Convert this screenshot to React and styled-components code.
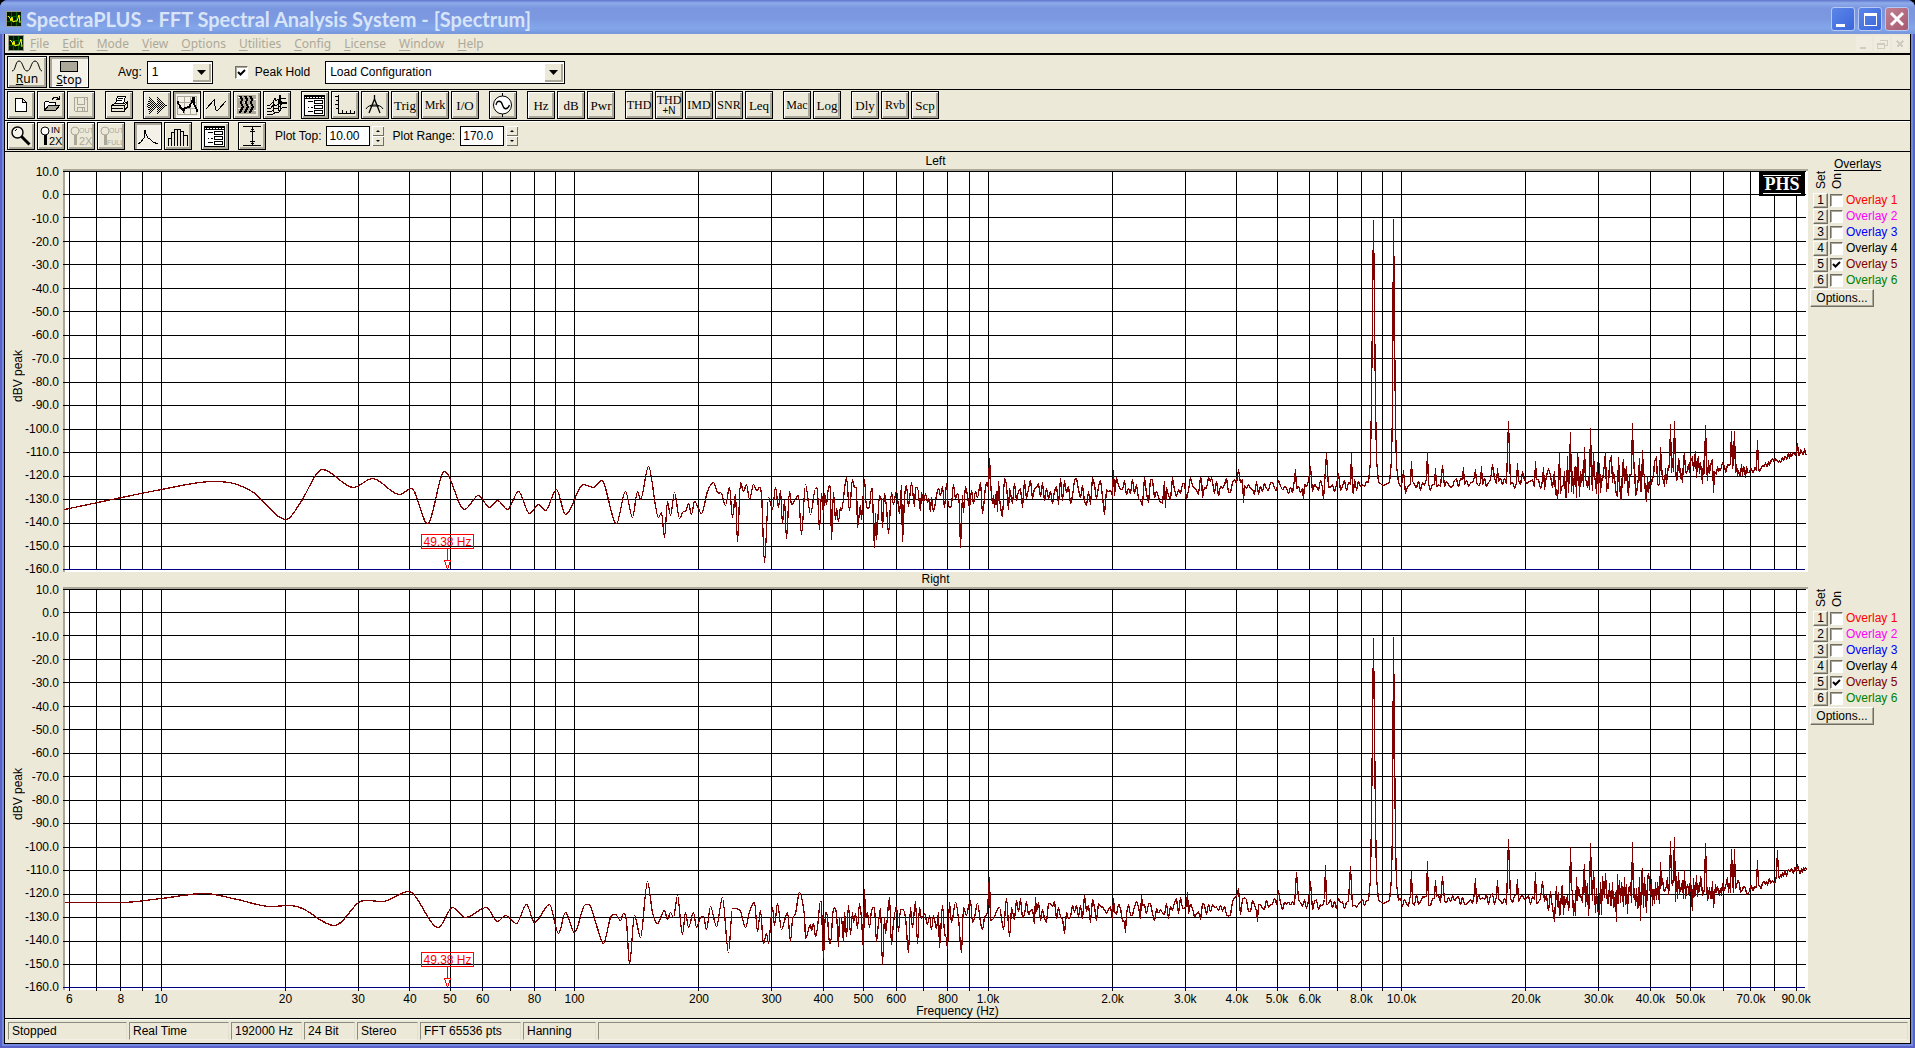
import React from 'react';
import styled, { createGlobalStyle, css } from 'styled-components';

const face = '#ece9d8';
const shade = '#aca899';
const trace = '#800000';

const GlobalStyle = createGlobalStyle`
  * { box-sizing: border-box; }
  body {
    margin: 0;
    background: #000;
    color: #000;
    font: 12px/14px "Liberation Sans", Arial, sans-serif;
  }
  button, input, select { font: inherit; color: inherit; margin: 0; }
`;

/* ---------- window frame ---------- */

const Frame = styled.div`
  display: flex;
  flex-direction: column;
  min-height: 100vh;
  padding: 0 4px 4px;
  border-radius: 8px 8px 0 0;
  background: #7489e0;
  box-shadow: inset 2px -2px 0 #5a62c8, inset -2px 0 0 #5a62c8;
`;

const TitleBar = styled.header`
  display: flex;
  align-items: center;
  height: 34px;
  margin: 0 -4px;
  padding: 3px 6px 0;
  border-radius: 8px 8px 0 0;
  background: linear-gradient(#5f75cc 0, #8eabea 3px, #7a96df 8px, #7b98e0 18px, #83a7ea 28px, #7896dc 34px);
`;

const Caption = styled.h1`
  flex: 1;
  margin: 0 0 0 4px;
  color: #d8e4f8;
  font: 700 20px/24px Lato, "Open Sans", sans-serif;
`;

const WindowButtons = styled.div`
  display: flex;
  gap: 3px;
`;

const WindowButton = styled.button`
  width: 24px;
  height: 24px;
  padding: 0;
  border: 1px solid #b6c8f4;
  border-radius: 3px;
  background: ${p => (p.$close ? 'linear-gradient(135deg, #c08090, #a85a70)' : 'linear-gradient(135deg, #5c86e8, #3a66dc)')};
  svg { display: block; }
`;

const Client = styled.main`
  flex: 1;
  display: flex;
  flex-direction: column;
  border: 1px solid #000;
  border-top: 0;
  background: ${face};
`;

const MenuBar = styled.nav`
  display: flex;
  align-items: center;
  height: 21px;
  padding: 0 2px 1px 3px;
  border-bottom: 2px solid #000;
  background: ${face};
`;

const MenuItem = styled.button`
  padding: 0 7px 0 6px;
  border: 0;
  background: none;
  color: #aca899;
  font: 12px/17px "Noto Sans", Tahoma, sans-serif;
  u { text-underline-offset: 2px; }
`;

const MdiButtons = styled.div`
  display: flex;
  gap: 2px;
  margin-left: auto;
`;

const MdiButton = styled.button`
  width: 16px;
  height: 15px;
  padding: 0;
  border: 0;
  background: #f0ede0;
  svg { display: block; }
`;

/* ---------- toolbars ---------- */

const Toolbar = styled.div`
  display: flex;
  align-items: center;
  height: ${p => p.$height}px;
  padding-left: 2px;
  border-bottom: 1px solid #000;
  box-shadow: ${p => (p.$lit ? 'inset 0 1px 0 #fff' : 'none')};
`;

const Group = styled.div`
  display: flex;
  gap: 2px;
  margin-right: ${p => p.$gap}px;
`;

const ToolButton = styled.button`
  display: flex;
  flex-direction: column;
  align-items: center;
  justify-content: center;
  width: ${p => p.$width || 28}px;
  height: ${p => p.$height || 28}px;
  padding: 0;
  border: 1px solid #000;
  background: ${face};
  box-shadow: inset 1px 1px 0 #fff, inset -2px -2px 0 ${shade};
  font: ${p => (p.$tight ? 12 : 13)}px/11px "Liberation Serif", serif;
  small { font: 10px/9px "Liberation Sans", sans-serif; }
  svg { display: block; flex: none; }
  ${p => p.$pressed && css`
    background: #f3f1e8;
    box-shadow: inset 2px 2px 0 ${shade}, inset -1px -1px 0 #fff;
  `}
`;

const BigLabel = styled.span`
  font: 12px/12px "Noto Sans", sans-serif;
`;

const Field = styled.label`
  display: flex;
  align-items: center;
  gap: ${p => p.$gap}px;
  margin-left: ${p => p.$left}px;
`;

const SelectBox = styled.span`
  position: relative;
  display: block;
  width: ${p => p.$width}px;
  select {
    display: block;
    width: 100%;
    height: 23px;
    padding: 0 22px 0 4px;
    border: 1px solid #000;
    border-radius: 0;
    background: #fff;
    appearance: none;
  }
  svg {
    position: absolute;
    top: 2px;
    right: 2px;
    pointer-events: none;
    background: ${face};
    box-shadow: inset 1px 1px 0 #fff, inset -2px -2px 0 ${shade};
  }
`;

const Check = styled.input`
  width: 13px;
  height: 13px;
  border: 1px solid;
  border-color: #716f64 #fff #fff #716f64;
  background: #fff;
  box-shadow: inset 1px 1px 0 ${shade};
  appearance: none;
  &:checked {
    background: #fff url("data:image/svg+xml,%3Csvg xmlns='http://www.w3.org/2000/svg' viewBox='0 0 11 11'%3E%3Cpath d='M2 5l2.500 2.500L9 3' fill='none' stroke='%23000' stroke-width='2'/%3E%3C/svg%3E");
  }
`;

const NumberBox = styled.input`
  width: 44px;
  height: 20px;
  padding: 0 2px;
  border: 1px solid #000;
  background: #fff;
`;

const Spinner = styled.div`
  display: flex;
  flex-direction: column;
  margin: 0 0 0 2px;
`;

const SpinButton = styled.button`
  width: 12px;
  height: 10px;
  padding: 0;
  border: 0;
  background: ${face};
  box-shadow: inset 1px 1px 0 #fff, inset -1px -1px 0 #716f64;
  svg { display: block; }
`;

/* ---------- plots ---------- */

const Plots = styled.section`
  flex: 1;
  display: grid;
  grid-template-columns: 58px minmax(0, 1fr) 102px;
  grid-template-rows: 17px minmax(200px, 1fr) 15px minmax(200px, 1fr) 28px;
`;

const PlotTitle = styled.h2`
  grid-column: 2;
  grid-row: ${p => p.$row};
  align-self: end;
  margin: 0 0 1px;
  font: 12px/14px "Liberation Sans", Arial, sans-serif;
  text-align: center;
`;

const YAxis = styled.div`
  grid-column: 1;
  grid-row: ${p => p.$row};
  display: flex;
  justify-content: space-between;
  padding: 0 4px 0 6px;
`;

const YUnit = styled.span`
  align-self: center;
  margin-bottom: -12px;
  writing-mode: vertical-rl;
  transform: rotate(180deg);
  white-space: nowrap;
`;

const YTicks = styled.div`
  display: flex;
  flex-direction: column;
  justify-content: space-between;
  margin: -4px 0 -4px;
  text-align: right;
  line-height: 14px;
`;

const PlotBox = styled.div`
  grid-column: 2;
  grid-row: ${p => p.$row};
  position: relative;
  min-height: 0;
  border-top: 2px solid ${shade};
  border-left: 2px solid ${shade};
  background: #fff;
`;

const PlotSvg = styled.svg`
  position: absolute;
  top: 0;
  left: 0;
  width: calc(100% - 2px);
  height: calc(100% - 2px);
  overflow: visible;
  shape-rendering: crispEdges;
  svg { overflow: visible; }
`;

const Cursor = styled.div`
  position: absolute;
  bottom: 3px;
  display: flex;
  flex-direction: column;
  align-items: center;
  width: 53px;
  margin-left: -26px;
  color: #f00;
  span {
    width: 53px;
    height: 15px;
    border: 1px solid #f00;
    line-height: 14px;
    text-align: center;
  }
  svg { display: block; }
`;

const Badge = styled.div`
  position: absolute;
  top: 0;
  right: 3px;
  width: 46px;
  padding: 4px 4px 2px;
  background: #000;
  color: #fff;
  font: bold 18px/17px "Liberation Serif", serif;
  text-align: center;
  span {
    display: block;
    border: solid #fff;
    border-width: 1px 0;
  }
`;

const XAxis = styled.div`
  grid-column: 2;
  grid-row: 5;
  display: flex;
  flex-direction: column;
  padding: 1px 2px 0;
  text-align: center;
  svg {
    width: 100%;
    height: 14px;
    flex: none;
    overflow: visible;
  }
  p { margin: 0 0 0 44px; line-height: 12px; }
`;

/* ---------- overlays ---------- */

const OverlayPanel = styled.aside`
  grid-column: 3;
  grid-row: ${p => p.$row} / span 2;
  padding-left: 2px;
`;

const OverlayTitle = styled.div`
  height: ${p => p.$height}px;
  padding: 5px 0 0 24px;
  text-decoration: underline;
  text-underline-offset: 2px;
`;

const OverlayHeads = styled.div`
  display: flex;
  align-items: flex-end;
  gap: 2px;
  height: 18px;
  padding-left: 4px;
  margin-bottom: 3px;
  span {
    width: 14px;
    writing-mode: vertical-rl;
    transform: rotate(180deg);
  }
`;

const OverlayRow = styled.div`
  display: flex;
  align-items: center;
  height: 16px;
  padding-left: 3px;
  label { margin-left: 3px; color: ${p => p.$color}; white-space: nowrap; }
`;

const Raised = styled.button`
  width: ${p => p.$width}px;
  height: ${p => p.$height}px;
  margin-right: 2px;
  padding: 0;
  border: 1px solid;
  border-color: #fff #716f64 #716f64 #fff;
  background: ${face};
  box-shadow: inset -1px -1px 0 ${shade};
  line-height: 12px;
`;

const OptionsRow = styled.div`
  padding-top: 1px;
`;

/* ---------- status bar ---------- */

const StatusBar = styled.footer`
  display: flex;
  gap: 2px;
  height: 25px;
  padding: 3px 2px 3px 3px;
  border-top: 1px solid #000;
  box-shadow: inset 0 1px 0 #fff;
`;

const StatusCell = styled.div`
  flex: ${p => (p.$width ? `0 0 ${p.$width}px` : '1')};
  padding-left: 3px;
  border: 1px solid;
  border-color: #8d8a7e #e2dfd0 #f3f1e6 #8d8a7e;
  line-height: 16px;
`;

/* ---------- icons ---------- */

const Icon = ({ children, size = 28, color = '#000' }) => (
  <svg width={size} height={size} viewBox={`0 0 ${size} ${size}`} fill="none" stroke={color} shapeRendering="crispEdges" aria-hidden="true">
    {children}
  </svg>
);

const AppIcon = () => (
  <svg width="16" height="16" viewBox="0 0 16 16" fill="none" aria-hidden="true">
    <rect x="0.5" y="0.5" width="15" height="15" fill="#001800" stroke="#9a9a8c" />
    <path d="M1 5.500h14M1 10.500h14M5.500 1v14M10.500 1v14" stroke="#006000" />
    <path d="M2 5l2 2 1 3 1-4 1 5 2-1 2 0 2-6 1 8" stroke="#ff0" />
  </svg>
);

const bars = [3, 9, 17, 15, 13, 11, 9, 7, 5, 3, 17, 15, 13, 11, 9, 7, 5, 3, 1, 1];

const dialogIcon = (
  <>
    <rect x="3.500" y="4.500" width="20" height="20" fill="#fff" />
    <path d="M4 5.500h19M4 7.500h19M5 6.500h1m2 0h1m2 0h1m2 0h1m2 0h1m2 0h1" />
    <path d="M7 10.500h5M7 16.500h1m2 0h2M7 20.500h5" />
    <rect x="13.500" y="9.500" width="8" height="3" />
    <rect x="13.500" y="14.500" width="8" height="3" />
    <rect x="13.500" y="19.500" width="8" height="3" />
  </>
);

const icons = {
  new: <path d="M8.500 7.500h7l4 4v9h-11zM15.500 7.500v4h4" fill="#fff" />,
  open: (
    <>
      <path d="M7.500 19.500v-8l1-1h3l1 1h6v3" fill="#fff" />
      <path d="M7.500 19.500l4-5h11l-4 5z" fill={shade} />
      <path d="M15 8.500l2-2h3l2 2M22.500 5v4M19 8.500h4" />
    </>
  ),
  save: <path d="M7.500 6.500h13v14h-12l-1-1zM10.500 7v6h7V7M10.500 20v-4h7v4M15.500 17v3M19 8.500h1" />,
  print: (
    <>
      <path d="M10.500 12.500l2-7h8l-2 7" fill="#fff" />
      <path d="M13 7.500h5M12 9.500h5" />
      <path d="M6.500 14.500l3-2h10l3-2v6l-4 4h-12z" fill={face} />
      <path d="M7 14.500h12v6M7 17.500h11M19 15l3-3M20 18l2-2M9 20.500h9" />
    </>
  ),
  wave: <path d={bars.map((h, i) => `M${4.5 + i} ${14 - (h - 1) / 2}v${h}`).join('')} strokeDasharray="1 1" />,
  spectrum: (
    <>
      <path d="M4.500 5v18M11.500 5v18M17.500 5v18M23.500 5v18M4 5.500h20M4 11.500h20M4 17.500h20M4 23.500h20" stroke={shade} />
      <path d="M4.500 10v2l2 2 1 3 2 1 1 2 1-3 5-1 1-3 1-1 2-6 1 8 2 4v3" strokeWidth="2" />
    </>
  ),
  time: <path d="M3 18l8-9v2l2 8h2l8-9" />,
  spectrogram: (
    <>
      <rect x="4" y="4" width="19" height="19" fill={shade} stroke="none" />
      <path d="M7 5l2 3-1 4 2 4-2 3-1 3M12 5l2 3-1 4 2 4-2 3-1 3M17 5l2 3-1 4 2 4-2 3-1 3" strokeWidth="2" />
      <path d="M5 6h2m4 5h1m4 3h1m4-6h2M5 17h2m14 2h2" stroke="#fff" />
    </>
  ),
  surface: (
    <>
      <path d="M4 14h3l3-3 2-4v3l4-2 1-4 1 3h5" />
      <path d="M4 17h4l3-4 1 2 4-2 1-5 2 4 5-1M4 20h5l3-3 2 1 3-3 2-3 5 0M4 23h6l3-2 3 0 3-4 5-1" />
      <path d="M10 11v10M17 6v12M15 9v11" />
    </>
  ),
  dialog: dialogIcon,
  ruler: <path d="M7.500 4v18.500H24M4 5.500h3M5 9.500h2M4 13.500h3M5 17.500h2M11.500 19v3M15.500 20v2M19.500 19v3M23.500 20v2" />,
  compass: (
    <g shapeRendering="auto">
      <path d="M13.500 4v4M13.500 8L8 22M13.500 8L19 22" strokeWidth="1.300" />
      <path d="M5 18a9 6 0 0 1 17 0M9 15h9" />
    </g>
  ),
  sine: (
    <g shapeRendering="auto">
      <path d="M13.500 2v24" />
      <circle cx="13.500" cy="14" r="9" fill="#fff" />
      <path d="M7 14c1-5 5-5 6.500 0s5 5 7 0" strokeWidth="1.300" />
    </g>
  ),
  zoom: (
    <g shapeRendering="auto">
      <circle cx="10.500" cy="10.500" r="5.500" fill="#f6f4ea" strokeWidth="1.400" />
      <path d="M8 9l2-2" />
      <path d="M14.500 14.500l8 8" strokeWidth="3" />
    </g>
  ),
  peak: <path d="M4 22l3-2 3-4 1-8 1 4 2 4 2 1 3 3 5 2" />,
  histogram: <path d="M4.500 24v-8h3v8M7.500 24V10h3v14M10.500 12V7h3v17M13.500 7h3v17M16.500 9h3v15M19.500 13h4v11" />,
  range: (
    <>
      <path d="M5 4.500h18M5 23.500h18M14.500 5v18" />
      <path d="M12 9.500h5M13 7.500h3M12 19.500h5M13 21.500h3" />
    </>
  ),
};

const ZoomText = ({ top, bottom, disabled }) => {
  const color = disabled ? shade : '#000';
  return (
    <Icon color={color}>
      <circle cx="8" cy="9" r="4" shapeRendering="auto" fill={disabled ? 'none' : '#fff'} />
      <path d="M8 13v10" strokeWidth="3" />
      <g fill={color} stroke="none" fontFamily="Liberation Sans, sans-serif">
        <text x={top === 'IN' ? 14 : 12} y="11" fontSize={top === 'IN' ? 9 : 7}>{top}</text>
        <text x={bottom === '2X' ? 12 : 10} y="23" fontSize={bottom === '2X' ? 11 : 7}>{bottom}</text>
      </g>
    </Icon>
  );
};

/* ---------- spectrum data ---------- */

// [x, y] turning points, in units of the 1742 x 398 plot
const leftLow = [
  [0, 338], [97, 318], [149, 310], [169, 312], [189, 321], [222, 348], [236, 331], [258, 298], [289, 316], [308, 307],
  [335, 323], [347, 317], [363, 352], [380, 300], [400, 338], [414, 324], [425, 336], [433, 329], [443, 338], [454, 320],
  [465, 342], [474, 333], [481, 339], [492, 318], [501, 343], [519, 313], [529, 316], [537, 309], [552, 352], [561, 320],
  [568, 346], [573, 320], [576, 328], [584, 295], [594, 346], [597, 341], [600, 366], [603, 330], [606, 344], [610, 321],
  [615, 347], [619, 340], [621, 340], [624, 332], [627, 343], [630, 330], [637, 342], [643, 320], [649, 311], [653, 321],
  [657, 322], [661, 334], [665, 316], [668, 346], [671, 323], [673, 370], [676, 311], [679, 320], [682, 313], [685, 328],
  [689, 313], [692, 319], [697, 323], [700, 391], [704, 326], [708, 338], [711, 316], [714, 336], [716, 319], [718, 352],
  [720, 329], [722, 367], [725, 320], [727, 333], [734, 324], [737, 363], [741, 313], [746, 343], [751, 317], [753, 320],
  [755, 358], [757, 322], [759, 341], [760, 322], [762, 333], [764, 316], [766, 321], [767, 368], [769, 321], [771, 348],
  [772, 337], [774, 350], [776, 336], [777, 339], [782, 306], [785, 339], [788, 308], [790, 316], [792, 316], [793, 356],
  [796, 334], [797, 348], [800, 308], [802, 336], [805, 335], [807, 317], [808, 322], [810, 376], [811, 342], [812, 368],
  [815, 324], [817, 331], [818, 356], [820, 322], [822, 336], [824, 362], [827, 321], [829, 333], [832, 319], [835, 342],
  [837, 314], [838, 370], [840, 327], [842, 314], [844, 335], [847, 311], [850, 335], [851, 316], [853, 316], [856, 339],
  [857, 321], [859, 331], [861, 322], [863, 331], [864, 327], [866, 340], [867, 326], [869, 340], [872, 324], [874, 317],
  [876, 324], [878, 315], [880, 336], [882, 312], [884, 335], [887, 333], [889, 313], [891, 327], [893, 322], [895, 337],
  [896, 376], [898, 324], [899, 341], [901, 315], [904, 331], [905, 336], [907, 319], [909, 332], [911, 320], [913, 326],
  [916, 311], [918, 342], [921, 316], [923, 311], [924, 318], [925, 287], [926, 309], [928, 332], [929, 324], [930, 336],
  [932, 320], [933, 340], [934, 310], [935, 326], [937, 342], [938, 345], [940, 307], [942, 314], [944, 338], [945, 317],
];

const rightLow = [
  [0, 313], [56, 313], [97, 309], [140, 304], [173, 310], [206, 317], [225, 316], [238, 319], [270, 336], [294, 313],
  [302, 311], [318, 312], [344, 302], [374, 338], [388, 318], [401, 328], [422, 318], [433, 332], [441, 326], [452, 334],
  [462, 315], [470, 333], [485, 315], [494, 344], [501, 323], [510, 343], [521, 315], [526, 317], [533, 339], [539, 354],
  [546, 328], [551, 325], [556, 331], [559, 324], [562, 332], [565, 375], [570, 326], [576, 348], [583, 292], [588, 323],
  [593, 334], [600, 321], [603, 330], [606, 323], [609, 328], [613, 306], [618, 345], [621, 323], [624, 338], [629, 323],
  [632, 338], [636, 328], [639, 327], [642, 340], [646, 317], [652, 337], [658, 308], [664, 363], [668, 319], [671, 319],
  [676, 322], [681, 338], [685, 322], [690, 313], [693, 342], [696, 321], [699, 354], [702, 344], [704, 354], [708, 318],
  [710, 336], [713, 314], [717, 340], [723, 323], [726, 352], [728, 330], [731, 324], [735, 303], [740, 326], [741, 349],
  [746, 335], [747, 341], [749, 334], [751, 347], [753, 338], [756, 312], [757, 316], [759, 368], [761, 323], [763, 328],
  [765, 354], [766, 354], [769, 319], [772, 324], [774, 357], [775, 328], [777, 328], [779, 352], [780, 323], [782, 347],
  [784, 316], [786, 345], [788, 323], [789, 333], [791, 324], [793, 339], [795, 314], [797, 329], [799, 359], [800, 300],
  [801, 328], [803, 323], [805, 338], [807, 321], [810, 318], [812, 352], [814, 333], [816, 319], [818, 375], [820, 328],
  [821, 344], [825, 308], [827, 355], [829, 333], [832, 317], [834, 342], [836, 320], [838, 320], [841, 328], [844, 363],
  [846, 318], [848, 338], [851, 312], [853, 354], [855, 318], [857, 329], [860, 324], [863, 335], [865, 326], [867, 340],
  [869, 326], [872, 339], [874, 323], [875, 358], [878, 316], [880, 343], [882, 349], [883, 359], [885, 313], [887, 333],
  [891, 313], [894, 329], [897, 363], [899, 318], [902, 326], [904, 317], [906, 311], [908, 333], [910, 328], [913, 314],
  [916, 333], [918, 340], [920, 328], [923, 321], [925, 288], [926, 331], [929, 329], [932, 322], [935, 318], [939, 340],
  [942, 309], [945, 347], [947, 318],
];

// two test tones near 8.5 kHz and 9.6 kHz
const tones = [
  [1304, 311], [1306, 290], [1307, 230], [1309, 49], [1311, 230], [1312, 288], [1314, 311], [1319, 314], [1325, 311],
  [1327, 289], [1328, 240], [1329, 48], [1331, 254], [1332, 294], [1334, 311],
];

// noise floor as [x, centre, swing]
const leftFloor = [
  [947, 322, 15], [1050, 319, 14], [1110, 319, 13], [1150, 316, 11], [1190, 316, 8], [1250, 315, 8], [1335, 314, 6],
  [1450, 311, 6], [1475, 310, 9], [1492, 309, 18], [1580, 307, 21], [1595, 301, 17], [1645, 298, 14], [1656, 298, 6],
  [1662, 293, 8], [1680, 300, 7], [1690, 299, 4], [1710, 290, 4], [1725, 284, 4], [1742, 280, 4],
];
const rightFloor = [
  [949, 323, 14], [1070, 321, 12], [1140, 318, 11], [1200, 315, 9], [1250, 314, 7], [1335, 311, 6], [1450, 309, 6],
  [1475, 311, 8], [1490, 308, 20], [1580, 304, 21], [1595, 298, 17], [1645, 298, 14], [1656, 301, 6], [1662, 295, 8],
  [1680, 299, 7], [1688, 299, 4], [1710, 290, 4], [1725, 282, 4], [1742, 280, 4],
];

const leftSpikes = [
  [1000, 309], [1028, 306], [1040, 343], [1049, 299], [1078, 334], [1101, 336], [1108, 306], [1137, 307], [1147, 306],
  [1174, 298], [1179, 331], [1231, 298], [1239, 328], [1246, 295], [1259, 328], [1262, 282], [1274, 302], [1287, 282],
  [1289, 322], [1339, 299], [1341, 322], [1347, 290], [1363, 281], [1371, 297], [1378, 294], [1399, 296], [1411, 298],
  [1417, 295], [1428, 293], [1433, 297], [1444, 250], [1453, 292], [1458, 300], [1471, 290], [1479, 296], [1484, 297],
  [1493, 328], [1495, 282], [1503, 285], [1506, 261], [1513, 281], [1520, 276], [1526, 257], [1529, 281], [1541, 281],
  [1547, 284], [1554, 286], [1557, 328], [1568, 252], [1578, 279], [1582, 330], [1592, 285], [1596, 276], [1606, 253],
  [1610, 250], [1620, 282], [1631, 280], [1641, 254], [1649, 321], [1667, 260], [1670, 260], [1693, 269], [1733, 272],
];
const rightSpikes = [
  [956, 309], [971, 308], [1000, 344], [1020, 306], [1049, 309], [1061, 343], [1077, 306], [1123, 303], [1136, 330],
  [1174, 299], [1193, 332], [1214, 301], [1232, 283], [1246, 292], [1261, 276], [1286, 277], [1347, 282], [1363, 272],
  [1371, 291], [1378, 287], [1411, 289], [1433, 291], [1444, 250], [1453, 290], [1471, 283], [1478, 292], [1490, 332],
  [1506, 258], [1520, 275], [1526, 254], [1529, 281], [1541, 284], [1552, 332], [1568, 253], [1576, 331], [1578, 279],
  [1596, 273], [1606, 252], [1610, 248], [1620, 281], [1628, 321], [1641, 254], [1649, 318], [1667, 260], [1670, 260],
  [1693, 271], [1713, 261], [1733, 275],
];

const smoothPath = points => {
  const slope = i => {
    const a = points[i - 1] || points[i];
    const b = points[i];
    const c = points[i + 1] || points[i];
    if (a !== b && b !== c && (b[1] - a[1]) * (c[1] - b[1]) <= 0) return 0;
    return (c[1] - a[1]) / (c[0] - a[0]);
  };
  return points.reduce((d, [x, y], i) => {
    if (!i) return `M${x} ${y}`;
    const [px, py] = points[i - 1];
    const step = (x - px) / 3;
    return `${d}C${px + step} ${py + slope(i - 1) * step} ${x - step} ${y - slope(i) * step} ${x} ${y}`;
  }, '');
};

const noisePath = (floor, spikes, seed) => {
  let state = seed;
  const random = () => {
    state = (state * 16807) % 2147483647;
    return state / 2147483647;
  };
  let d = '';
  let side = 1;
  for (let x = floor[0][0]; x <= 1742; x += 1) {
    const i = Math.max(1, floor.findIndex(f => f[0] >= x));
    const [ax, ac, as] = floor[i - 1];
    const [bx, bc, bs] = floor[i];
    const t = (x - ax) / (bx - ax);
    const spike = spikes.find(s => s[0] === x);
    const tone = tones.find(s => s[0] === x);
    const coarse = x < 1490 && x % 2 === 1;
    const quiet = x > 1303 && x < 1335;
    if (spike || tone) {
      d += `L${x} ${(spike || tone)[1]}`;
    } else if (!coarse && !quiet) {
      if (random() > 0.35) side = -side;
      const y = ac + (bc - ac) * t + side * random() * (as + (bs - as) * t);
      d += `L${x} ${y.toFixed(1)}`;
    }
  }
  return d;
};

const leftTrace = smoothPath(leftLow) + noisePath(leftFloor, leftSpikes, 4711);
const rightTrace = smoothPath(rightLow) + noisePath(rightFloor, rightSpikes, 1973);

/* ---------- axes ---------- */

const WIDTH = 1741;
const xOf = f => 96 + 413.5 * Math.log10(f / 10);

const gridFreqs = [6, 7, 8, 9];
[10, 100, 1000, 10000].forEach(decade => {
  for (let n = 1; n < 10; n += 1) gridFreqs.push(n * decade);
});

const labelled = gridFreqs.filter(f => {
  const lead = Number(String(f)[0]);
  if (f > 50000) return lead === 7 || lead === 9;
  return lead !== 7 && lead !== 9;
});
const freqLabel = f => (f < 1000 ? String(f) : `${(f / 1000).toFixed(1)}k`);

const levels = Array.from({ length: 18 }, (_, i) => 10 - i * 10);

const Plot = ({ row, path, last, children }) => (
  <PlotBox $row={row}>
    <PlotSvg>
      <svg width="100%" height="100%" viewBox={`0 0 ${WIDTH} 399`} preserveAspectRatio="none" fill="none">
        <g stroke="#000">
          {gridFreqs.map(f => {
            const x = Math.floor(xOf(f)) + 0.5;
            return <path key={f} d={`M${x} 0V${last ? 402 : 398}`} vectorEffect="non-scaling-stroke" />;
          })}
          {levels.slice(0, -1).map((level, i) => (
            <path key={level} d={`M-2 ${Math.floor(i * 23.47) + 0.5}H${WIDTH}`} vectorEffect="non-scaling-stroke" />
          ))}
        </g>
        <path d={`M-2 398.500H${WIDTH - 1}`} stroke="#000080" vectorEffect="non-scaling-stroke" />
        <path
          d={path}
          transform="translate(-0.5 0.5)"
          stroke={trace}
          strokeWidth="1.300"
          strokeLinejoin="bevel"
          vectorEffect="non-scaling-stroke"
        />
      </svg>
    </PlotSvg>
    <Cursor style={{ left: `${(100 * 382) / 1743}%` }}>
      <span>49.38 Hz</span>
      <svg width="9" height="20" viewBox="0 0 9 20" fill="none" stroke="#f00" shapeRendering="crispEdges">
        <path d="M4.500 0v12M1 11.500h7M1.500 12l3 8 3-8" />
      </svg>
    </Cursor>
    {children}
  </PlotBox>
);

const Levels = ({ row }) => (
  <YAxis $row={row}>
    <YUnit>dBV peak</YUnit>
    <YTicks>
      {levels.map(level => <span key={level}>{level.toFixed(1)}</span>)}
    </YTicks>
  </YAxis>
);

const overlays = ['#ff0000', '#ff00ff', '#0000ff', '#000000', '#800000', '#008000'];

const Overlays = ({ channel, row, title, height }) => (
  <OverlayPanel $row={row}>
    <OverlayTitle $height={height}>{title}</OverlayTitle>
    <OverlayHeads><span>Set</span><span>On</span></OverlayHeads>
    {overlays.map((color, i) => (
      <OverlayRow key={color} $color={color}>
        <Raised $width={15} $height={15}>{i + 1}</Raised>
        <Check type="checkbox" id={`${channel}-${i}`} defaultChecked={i === 4} />
        <label htmlFor={`${channel}-${i}`}>Overlay {i + 1}</label>
      </OverlayRow>
    ))}
    <OptionsRow><Raised $width={64} $height={18}>Options...</Raised></OptionsRow>
  </OverlayPanel>
);

/* ---------- controls ---------- */

const menus = ['File', 'Edit', 'Mode', 'View', 'Options', 'Utilities', 'Config', 'License', 'Window', 'Help'];

const Tool = ({ icon, label, ...rest }) => (
  <ToolButton aria-label={icon} {...rest}>
    {icon ? <Icon color={rest.disabled ? shade : '#000'}>{icons[icon]}</Icon> : label}
  </ToolButton>
);

const Select = ({ width, value, label }) => (
  <SelectBox $width={width}>
    <select defaultValue={value} aria-label={label}><option>{value}</option></select>
    <svg width="19" height="19" viewBox="0 0 19 19" aria-hidden="true"><path d="M5 7h9l-4.500 5z" /></svg>
  </SelectBox>
);

const Spin = ({ label }) => (
  <Spinner>
    <SpinButton aria-label={`${label} up`}><svg width="12" height="10"><path d="M4 6h4L6 4z" /></svg></SpinButton>
    <SpinButton aria-label={`${label} down`}><svg width="12" height="10"><path d="M4 4h4L6 6z" /></svg></SpinButton>
  </Spinner>
);

const statusCells = [
  ['Stopped', 119], ['Real Time', 100], ['192000 Hz', 71], ['24 Bit', 51], ['Stereo', 61], ['FFT 65536 pts', 101],
  ['Hanning', 73], ['', 0],
];

const App = () => (
  <Frame>
    <GlobalStyle />
    <TitleBar>
      <AppIcon />
      <Caption>SpectraPLUS - FFT Spectral Analysis System - [Spectrum]</Caption>
      <WindowButtons>
        <WindowButton aria-label="Minimize"><Icon size={22} color="#fff"><path d="M4 17h9" strokeWidth="3" /></Icon></WindowButton>
        <WindowButton aria-label="Maximize">
          <Icon size={22} color="#fff"><path d="M5 6h13M5.500 5v12.500h12V5" /><path d="M5 6h13" strokeWidth="3" /></Icon>
        </WindowButton>
        <WindowButton $close aria-label="Close">
          <Icon size={22} color="#fff"><path d="M5 5l12 12M17 5L5 17" strokeWidth="3" shapeRendering="auto" /></Icon>
        </WindowButton>
      </WindowButtons>
    </TitleBar>
    <Client>
      <MenuBar>
        <AppIcon />
        {menus.map(name => (
          <MenuItem key={name}><u>{name[0]}</u>{name.slice(1)}</MenuItem>
        ))}
        <MdiButtons>
          <MdiButton aria-label="Minimize document"><Icon size={16} color="#d0cdbe"><path d="M4 12h6" strokeWidth="2" /></Icon></MdiButton>
          <MdiButton aria-label="Restore document"><Icon size={16} color="#d0cdbe"><path d="M6 4.500h7v5h-2M3.500 7.500h7v5h-7zM3 8.500h7" /></Icon></MdiButton>
          <MdiButton aria-label="Close document"><Icon size={16} color="#d0cdbe"><path d="M5 5l6 6M11 5l-6 6" strokeWidth="2" /></Icon></MdiButton>
        </MdiButtons>
      </MenuBar>

      <Toolbar $height={35}>
        <Group $gap={0}>
          <ToolButton $width={40} $height={32}>
            <svg width="32" height="14" fill="none" stroke="#000"><path d="M1 12C5 12 4 2 8 2s4 10 8 10 4-10 8-10 4 10 7 10" /></svg>
            <BigLabel><u>R</u>un</BigLabel>
          </ToolButton>
          <ToolButton $width={40} $height={32} $pressed>
            <svg width="20" height="16"><rect x="1.500" y="3.500" width="17" height="10" fill={shade} stroke="#000" /></svg>
            <BigLabel><u>S</u>top</BigLabel>
          </ToolButton>
        </Group>
        <Field $left={29} $gap={5}>Avg: <Select width={66} value="1" /></Field>
        <Field $left={22} $gap={7}><Check type="checkbox" defaultChecked /> Peak Hold</Field>
        <Field $left={15} $gap={0}><Select width={240} value="Load Configuration" label="Configuration" /></Field>
      </Toolbar>

      <Toolbar $height={31}>
        <Group $gap={10}><Tool icon="new" /><Tool icon="open" /><Tool icon="save" disabled /></Group>
        <Group $gap={10}><Tool icon="print" /></Group>
        <Group $gap={10}>
          <Tool icon="wave" /><Tool icon="spectrum" $pressed /><Tool icon="time" /><Tool icon="spectrogram" /><Tool icon="surface" />
        </Group>
        <Group $gap={10}>
          <Tool icon="dialog" /><Tool icon="ruler" /><Tool icon="compass" />
          <Tool label="Trig" /><Tool label="Mrk" $tight /><Tool label="I/O" />
        </Group>
        <Group $gap={10}><Tool icon="sine" /></Group>
        <Group $gap={10}><Tool label="Hz" /><Tool label="dB" /><Tool label="Pwr" /></Group>
        <Group $gap={10}>
          <Tool label="THD" $tight />
          <Tool $tight label={<>THD<small>+N</small></>} />
          <Tool label="IMD" $tight /><Tool label="SNR" $tight /><Tool label="Leq" />
        </Group>
        <Group $gap={10}><Tool label="Mac" $tight /><Tool label="Log" /></Group>
        <Group $gap={0}><Tool label="Dly" /><Tool label="Rvb" $tight /><Tool label="Scp" /></Group>
      </Toolbar>

      <Toolbar $height={31} $lit>
        <Group $gap={9}>
          <Tool icon="zoom" />
          <ToolButton><ZoomText top="IN" bottom="2X" /></ToolButton>
          <ToolButton disabled><ZoomText top="OUT" bottom="2X" disabled /></ToolButton>
          <ToolButton disabled><ZoomText top="OUT" bottom="FULL" disabled /></ToolButton>
        </Group>
        <Group $gap={9}><Tool icon="peak" $pressed /><Tool icon="histogram" /></Group>
        <Group $gap={9}><Tool icon="dialog" /></Group>
        <Group $gap={0}><Tool icon="range" /></Group>
        <Field $left={9} $gap={5}>Plot Top: <NumberBox defaultValue="10.00" /></Field>
        <Spin label="Plot Top" />
        <Field $left={8} $gap={5}>Plot Range: <NumberBox defaultValue="170.0" /></Field>
        <Spin label="Plot Range" />
      </Toolbar>

      <Plots>
        <PlotTitle $row={1}>Left</PlotTitle>
        <Levels row={2} />
        <Plot row={2} path={leftTrace}><Badge><span>PHS</span></Badge></Plot>
        <Overlays channel="left" row={1} title="Overlays" height={19} />

        <PlotTitle $row={3}>Right</PlotTitle>
        <Levels row={4} />
        <Plot row={4} path={rightTrace} last />
        <Overlays channel="right" row={3} height={17} />

        <XAxis>
          <svg fill="#000">
            {labelled.map(f => (
              <text key={f} x={`${(100 * xOf(f)) / WIDTH}%`} y="12" textAnchor="middle">{freqLabel(f)}</text>
            ))}
          </svg>
          <p>Frequency (Hz)</p>
        </XAxis>
      </Plots>

      <StatusBar>
        {statusCells.map(([text, width]) => <StatusCell key={text} $width={width}>{text}</StatusCell>)}
      </StatusBar>
    </Client>
  </Frame>
);

export default App;
